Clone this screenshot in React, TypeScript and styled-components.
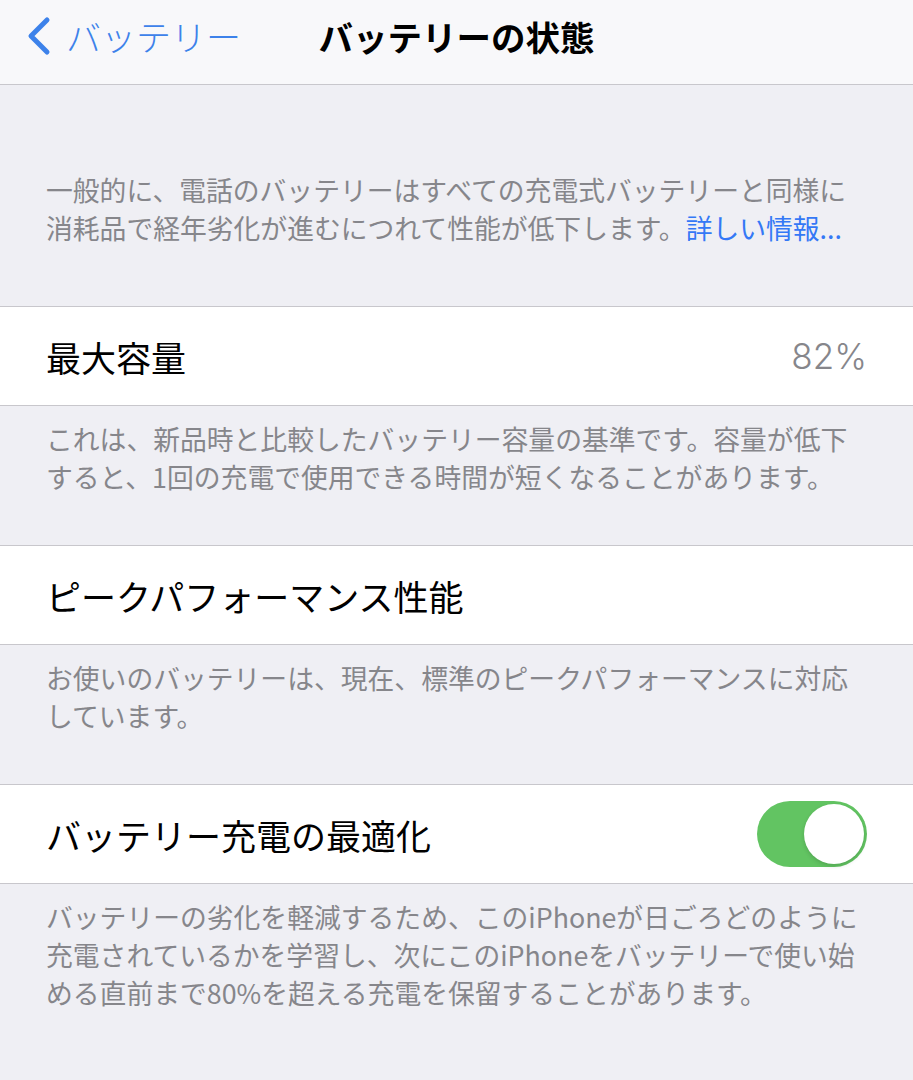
import React, { FC } from 'react';
import styled, { createGlobalStyle } from 'styled-components';

const color = {
  navBg: '#f8f8fa',
  groupBg: '#efeff4',
  separator: '#c8c7cc',
  label: '#000000',
  secondary: '#86868b',
  blue: '#3478f6',
  backBlue: '#3d82ea',
  green: '#62c462',
};

const GlobalStyle = createGlobalStyle`
  html, body {
    margin: 0;
    padding: 0;
    background: ${color.groupBg};
  }
  body {
    font-family: "Noto Sans CJK JP", "Noto Sans", sans-serif;
    -webkit-font-smoothing: antialiased;
  }
`;

type Section = {
  label: string;
  value?: string;
  toggle?: boolean;
  footer: string;
};

const sections: Section[] = [
  {
    label: '最大容量',
    value: '82%',
    footer:
      'これは、新品時と比較したバッテリー容量の基準です。容量が低下すると、1回の充電で使用できる時間が短くなることがあります。',
  },
  {
    label: 'ピークパフォーマンス性能',
    footer: 'お使いのバッテリーは、現在、標準のピークパフォーマンスに対応しています。',
  },
  {
    label: 'バッテリー充電の最適化',
    toggle: true,
    footer:
      'バッテリーの劣化を軽減するため、このiPhoneが日ごろどのように充電されているかを学習し、次にこのiPhoneをバッテリーで使い始める直前まで80%を超える充電を保留することがあります。',
  },
];

const App: FC = () => {
  return (
    <>
      <GlobalStyle />
      <Page>
        <NavBar>
          <BackButton>
            <svg width="30" height="40" viewBox="0 0 30 40">
              <polyline
                points="23,4 7,20 23,36"
                fill="none"
                stroke={color.backBlue}
                strokeWidth="5"
                strokeLinecap="round"
                strokeLinejoin="round"
              />
            </svg>
            <BackLabel>バッテリー</BackLabel>
          </BackButton>
          <Title>バッテリーの状態</Title>
        </NavBar>
        <Intro>
          一般的に、電話のバッテリーはすべての充電式バッテリーと同様に消耗品で経年劣化が進むにつれて性能が低下します。<Link>詳しい情報...</Link>
        </Intro>
        {sections.map(section => (
          <div key={section.label}>
            <Row>
              <RowLabel>{section.label}</RowLabel>
              {section.value && <RowValue>{section.value}</RowValue>}
              {section.toggle && (
                <Switch>
                  <Knob />
                </Switch>
              )}
            </Row>
            <Footer>{section.footer}</Footer>
          </div>
        ))}
      </Page>
    </>
  );
};

export default App;

const Page = styled.div`
  width: 913px;
  min-height: 1080px;
  background: ${color.groupBg};
`;

const NavBar = styled.header`
  position: relative;
  height: 85px;
  background: ${color.navBg};
  border-bottom: 1px solid ${color.separator};
  display: flex;
  justify-content: center;
  align-items: flex-start;
  box-sizing: border-box;
`;

const BackButton = styled.div`
  position: absolute;
  left: 24px;
  top: 16px;
  display: flex;
  align-items: center;
  gap: 12px;
`;

const BackLabel = styled.span`
  font-size: 35px;
  line-height: 40px;
  color: ${color.backBlue};
  font-weight: 300;
`;

const Title = styled.h1`
  margin: 16px 0 0;
  font-size: 34.5px;
  line-height: 40px;
  font-weight: 700;
  color: ${color.label};
`;

const Intro = styled.p`
  margin: 0;
  padding: 86px 60px 59px 46px;
  font-size: 26.8px;
  line-height: 38px;
  color: ${color.secondary};
`;

const Link = styled.span`
  color: ${color.blue};
`;

const Row = styled.div`
  height: 98px;
  background: #ffffff;
  border-top: 1px solid ${color.separator};
  border-bottom: 1px solid ${color.separator};
  display: flex;
  align-items: center;
  justify-content: space-between;
  padding: 0 46px;
`;

const RowLabel = styled.span`
  font-size: 35px;
  color: ${color.label};
`;

const RowValue = styled.span`
  font-size: 35px;
  color: ${color.secondary};
  font-family: "Inter", "Noto Sans CJK JP", sans-serif;
  font-weight: 300;
`;

const Switch = styled.div`
  width: 110px;
  height: 66px;
  border-radius: 33px;
  background: ${color.green};
  display: flex;
  align-items: center;
  justify-content: flex-end;
  padding: 0 3px;
  box-sizing: border-box;
`;

const Knob = styled.div`
  width: 60px;
  height: 60px;
  border-radius: 50%;
  background: #ffffff;
  box-shadow: 0 2px 4px rgba(0, 0, 0, 0.15);
`;

const Footer = styled.p`
  margin: 0;
  padding: 14px 50px 49px 46px;
  font-size: 26.8px;
  line-height: 38px;
  color: ${color.secondary};
`;
